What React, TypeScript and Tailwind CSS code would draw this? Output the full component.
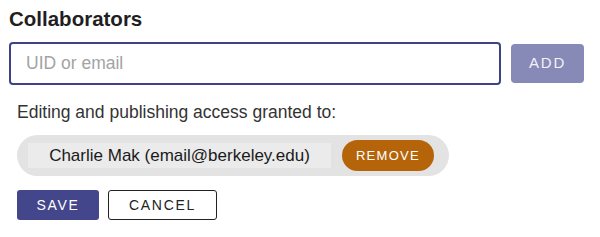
export default function App() {
  return (
    <div className="w-[600px] h-[237px] bg-white pl-[9px] pt-[7px] font-['Liberation_Sans',Arial,sans-serif] text-[#222]">
      <h2 className="text-[20.5px] font-bold leading-[23px] text-[#1f1f1f]">Collaborators</h2>

      <div className="mt-[12px] flex items-center gap-[10px]">
        <input
          type="text"
          placeholder="UID or email"
          className="w-[492px] h-[43px] rounded-[4px] border-2 border-[#3f4286] px-[15px] text-[17.5px] outline-none placeholder:text-[#a3a3a3]"
        />
        <button className="w-[73px] h-[39px] rounded-[4px] bg-[#8789b6] text-[15px] tracking-[0.12em] text-[#f2f2f8]">
          ADD
        </button>
      </div>

      <div className="pl-[8px]">
        <p className="mt-[17px] text-[17.5px] leading-[20px] text-[#333]">Editing and publishing access granted to:</p>

        <div className="mt-[13px] w-[432px] h-[41px] rounded-full bg-[#e3e3e3] flex items-center pl-[11px] pr-[15px]">
          <div className="w-[303px] h-[25px] bg-[#ebebeb] flex items-center justify-center text-[17px] text-[#1a1a1a]">
            Charlie Mak (email@berkeley.edu)
          </div>
          <button className="ml-[11px] w-[92px] h-[31px] rounded-full bg-[#b5640a] text-[13px] tracking-[0.1em] text-white">
            REMOVE
          </button>
        </div>

        <div className="mt-[14px] flex gap-[9px]">
          <button className="w-[82px] h-[30px] rounded-[3px] bg-[#43468b] text-[14px] tracking-[0.12em] text-white">
            SAVE
          </button>
          <button className="w-[109px] h-[30px] rounded-[3px] border border-[#222] bg-white text-[14px] tracking-[0.12em] text-[#222]">
            CANCEL
          </button>
        </div>
      </div>
    </div>
  );
}
